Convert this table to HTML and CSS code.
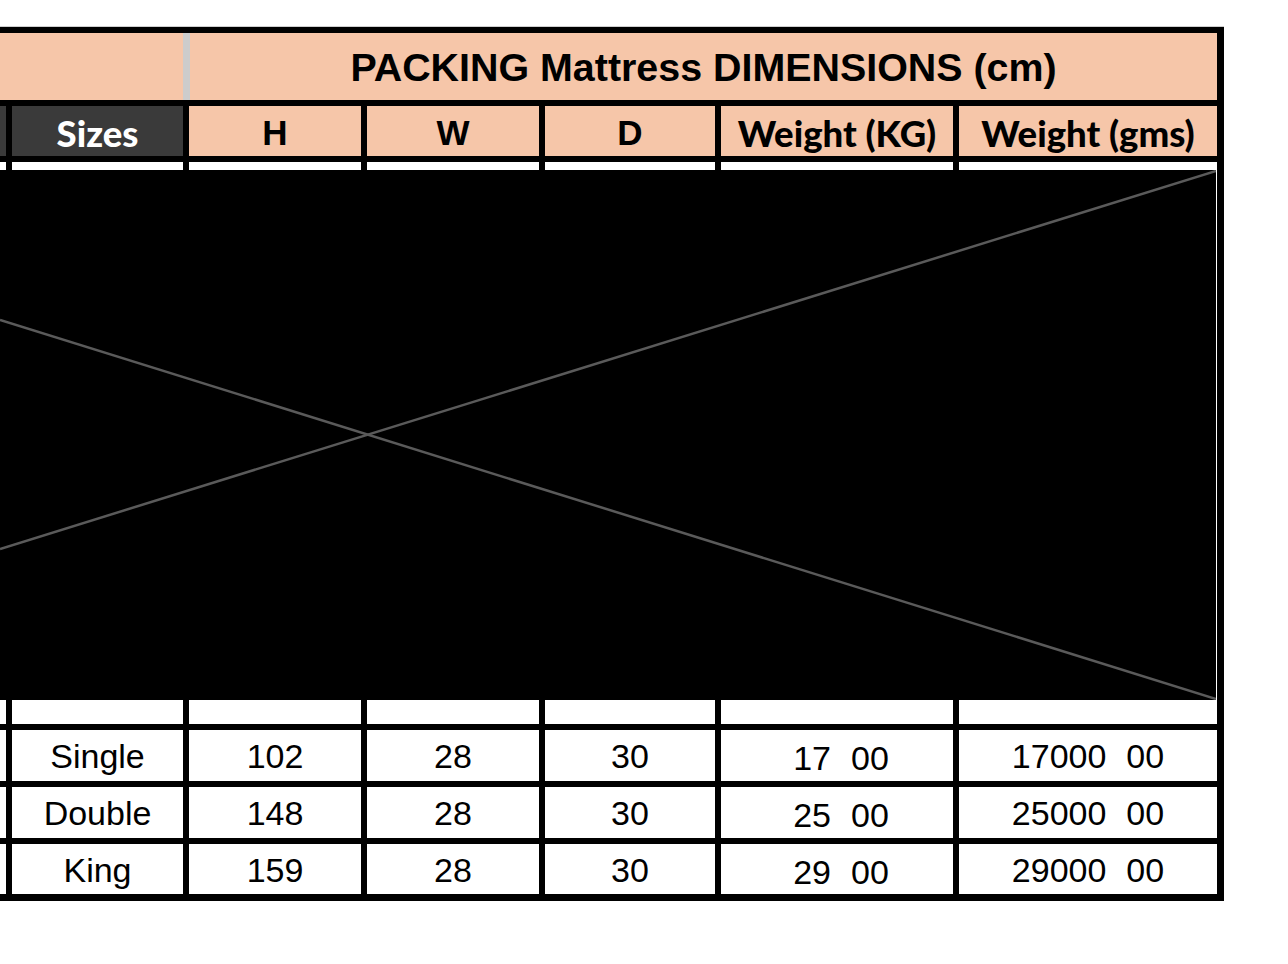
FILE: index.html
```html
<!DOCTYPE html>
<html>
<head>
<meta charset="utf-8">
<title>Packing Mattress Dimensions</title>
<link rel="stylesheet" href="styles.css">
</head>
<body>
<div class="sheet">
  <div class="title-row">
    <div class="title-left"></div>
    <div class="title-sep"></div>
    <div class="title-main">PACKING Mattress DIMENSIONS (cm)</div>
  </div>

  <div class="cell dark"></div>
  <div class="cell dark label-alt">Sizes</div>
  <div class="cell head">H</div>
  <div class="cell head">W</div>
  <div class="cell head">D</div>
  <div class="cell head label-alt">Weight (KG)</div>
  <div class="cell head label-alt">Weight (gms)</div>

  <div class="cell"></div>
  <div class="cell"></div>
  <div class="cell"></div>
  <div class="cell"></div>
  <div class="cell"></div>
  <div class="cell"></div>
  <div class="cell"></div>

  <div class="cell"></div>
  <div class="cell data">Single</div>
  <div class="cell data">102</div>
  <div class="cell data">28</div>
  <div class="cell data">30</div>
  <div class="cell data kg"><span>17</span><span class="dec">00</span></div>
  <div class="cell data"><span>17000</span><span class="dec">00</span></div>

  <div class="cell"></div>
  <div class="cell data">Double</div>
  <div class="cell data">148</div>
  <div class="cell data">28</div>
  <div class="cell data">30</div>
  <div class="cell data kg"><span>25</span><span class="dec">00</span></div>
  <div class="cell data"><span>25000</span><span class="dec">00</span></div>

  <div class="cell"></div>
  <div class="cell data">King</div>
  <div class="cell data">159</div>
  <div class="cell data">28</div>
  <div class="cell data">30</div>
  <div class="cell data kg"><span>29</span><span class="dec">00</span></div>
  <div class="cell data"><span>29000</span><span class="dec">00</span></div>

  <svg class="placeholder" width="1216" height="530" viewBox="0 0 1216 530">
    <rect x="0" y="0" width="1216" height="530" fill="#000"/>
    <line x1="1216" y1="1" x2="0" y2="379" stroke="#5a5a5a" stroke-width="2.5"/>
    <line x1="1216" y1="529" x2="0" y2="150" stroke="#5a5a5a" stroke-width="2.5"/>
  </svg>
</div>
</body>
</html>
```

FILE: styles.css
```css
html, body {
  margin: 0;
  padding: 0;
  background: #ffffff;
}

body {
  padding-top: 26px;
}

.sheet {
  position: relative;
  width: 1224px;
  box-sizing: border-box;
  display: grid;
  grid-template-columns: 6px 171px 172px 172px 170px 232px 258px;
  grid-template-rows: 67px 50px 562px 51px 51px 50px;
  column-gap: 6px;
  row-gap: 6px;
  padding: 6px 7px 7px 0;
  background: #000;
  border-top: 1px solid #cfcfcf;
  font-family: "Liberation Sans", Arial, sans-serif;
}

.title-row {
  grid-column: 1 / -1;
  display: flex;
}

.title-left {
  width: 183px;
  background: #f6c6a9;
}

.title-sep {
  width: 7px;
  background: #cccccc;
}

.title-main {
  flex: 1;
  background: #f6c6a9;
  display: flex;
  align-items: center;
  justify-content: center;
  font-weight: bold;
  font-size: 39.4px;
  color: #000;
  padding-top: 1px;
}

.cell {
  background: #ffffff;
  display: flex;
  align-items: center;
  justify-content: center;
  color: #000;
  white-space: nowrap;
}

.dark {
  background: #3a3a3a;
  color: #ffffff;
}

.head {
  background: #f6c6a9;
  font-weight: bold;
  font-size: 35px;
  padding-top: 3px;
}

.label-alt {
  font-family: Lato, "Liberation Sans", sans-serif;
  font-weight: 900;
  font-size: 36.5px;
  padding-top: 3px;
}

.data {
  font-size: 34px;
  padding-top: 2px;
}

.dec {
  margin-left: 20px;
}

.kg {
  padding-top: 6px;
  padding-left: 8px;
}

.placeholder {
  position: absolute;
  left: 0;
  top: 143px;
  display: block;
}
```
